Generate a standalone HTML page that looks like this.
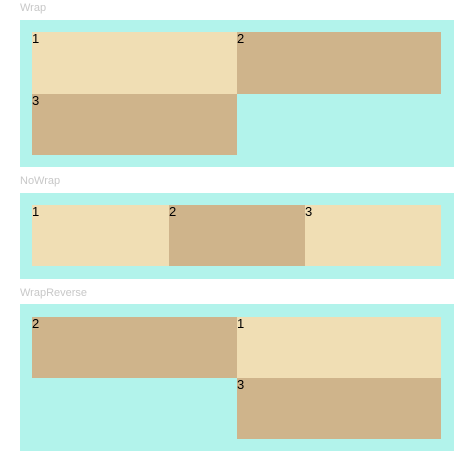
<!DOCTYPE html>
<html><head><style>
body{margin:0;width:472px;height:468px;background:#fff;position:relative;font-family:"Liberation Sans",sans-serif;overflow:hidden}
.l{position:absolute;left:20px;font-size:11px;color:#c8c8c8;line-height:14px}
.b{position:absolute;left:20px;width:434px;background:#b2f3eb}
.i{position:absolute;font-size:13px;line-height:14px;color:#000}
.a{background:#f0deb4}.c{background:#cfb48b}
</style></head><body>
<div class="l" style="top:1px">Wrap</div>
<div class="b" style="top:20px;height:147px">
<div class="i a" style="left:12px;top:12px;width:205px;height:62px">1</div>
<div class="i c" style="left:217px;top:12px;width:204px;height:62px">2</div>
<div class="i c" style="left:12px;top:74px;width:205px;height:61px">3</div>
</div>
<div class="l" style="top:174px">NoWrap</div>
<div class="b" style="top:193px;height:86px">
<div class="i a" style="left:12px;top:12px;width:137px;height:61px">1</div>
<div class="i c" style="left:149px;top:12px;width:136px;height:61px">2</div>
<div class="i a" style="left:285px;top:12px;width:136px;height:61px">3</div>
</div>
<div class="l" style="top:286px">WrapReverse</div>
<div class="b" style="top:304px;height:147px">
<div class="i c" style="left:12px;top:13px;width:205px;height:61px">2</div>
<div class="i a" style="left:217px;top:13px;width:204px;height:61px">1</div>
<div class="i c" style="left:217px;top:74px;width:204px;height:61px">3</div>
</div>
</body></html>
